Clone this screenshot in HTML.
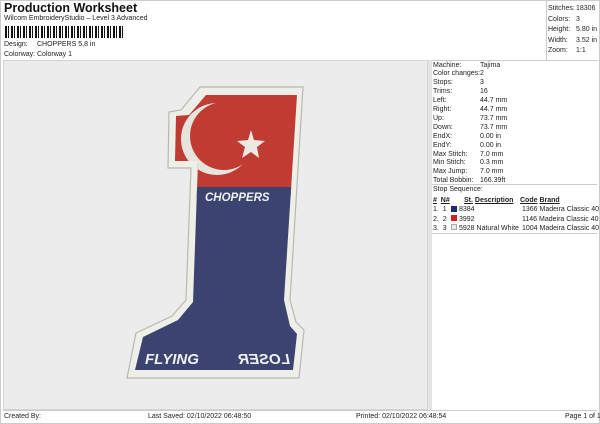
<!DOCTYPE html>
<html><head><style>
body{margin:0;width:600px;height:424px;background:#fff;font-family:"Liberation Sans",sans-serif;position:relative;overflow:hidden;color:#222}
.a{position:absolute;font-size:7px;white-space:nowrap}
.t{position:absolute;left:4px;top:1px;font-size:12.5px;font-weight:bold;color:#111}
</style></head><body>
<div style="position:absolute;left:0;top:0;width:600px;height:424px;border:1px solid #ccc;box-sizing:border-box"></div>
<div class="t">Production Worksheet</div>
<div class="a" style="left:4px;top:15px">Wilcom EmbroideryStudio – Level 3 Advanced</div>
<div style="position:absolute;left:5px;top:26px;width:118px;height:12px;background:repeating-linear-gradient(90deg,#111 0 2px,#fff 2px 3px,#111 3px 4px,#fff 4px 6px)"></div>
<div class="a" style="left:4px;top:41px">Design:</div><div class="a" style="left:37px;top:41px">CHOPPERS 5,8 in</div>
<div class="a" style="left:4px;top:51px">Colorway:</div><div class="a" style="left:37px;top:51px">Colorway 1</div>
<div style="position:absolute;left:3px;top:60px;width:425px;height:350px;background:#ececec;border:1px solid #d4d4d4;box-sizing:border-box"></div>
<div style="position:absolute;left:428px;top:60px;width:169px;height:350px;border-top:1px solid #ccc;border-left:1px solid #ccc"></div>
<div style="position:absolute;left:546px;top:0;width:51px;height:60px;border-left:1px solid #ccc"></div>
<div class="a" style="left:548px;top:4px;line-height:10.5px">Stitches:<br>Colors:<br>Height:<br>Width:<br>Zoom:</div>
<div class="a" style="left:576px;top:4px;line-height:10.5px">18306<br>3<br>5.80 in<br>3.52 in<br>1:1</div>
<div style="position:absolute;left:428px;top:60px;width:4px;height:350px;background:#e4e4e4"></div>
<div class="a" style="left:433px;top:61.5px;line-height:8.9px">Machine:<br>Color changes:<br>Stops:<br>Trims:<br>Left:<br>Right:<br>Up:<br>Down:<br>EndX:<br>EndY:<br>Max Stitch:<br>Min Stitch:<br>Max Jump:<br>Total Bobbin:<br>Stop Sequence:</div>
<div class="a" style="left:480px;top:61.5px;line-height:8.9px">Tajima<br>2<br>3<br>16<br>44.7 mm<br>44.7 mm<br>73.7 mm<br>73.7 mm<br>0.00 in<br>0.00 in<br>7.0 mm<br>0.3 mm<br>7.0 mm<br>166.39ft</div>
<div style="position:absolute;left:432px;top:184px;width:165px;border-top:1px solid #ccc"></div>
<div class="a" style="left:433px;top:197px;font-weight:bold"><u>#</u>&nbsp;&nbsp;<u>N#</u></div>
<div class="a" style="left:464px;top:197px;font-weight:bold"><u>St.</u> <u>Description</u></div>
<div class="a" style="left:520px;top:197px;font-weight:bold"><u>Code</u> <u>Brand</u></div>
<div class="a" style="left:433px;top:205px;line-height:9.5px">1.&nbsp; 1<br>2.&nbsp; 2<br>3.&nbsp; 3</div>
<div style="position:absolute;left:451px;top:206px;width:6px;height:6px;background:#1f2b6e"></div>
<div style="position:absolute;left:451px;top:215px;width:6px;height:6px;background:#d42020"></div>
<div style="position:absolute;left:451px;top:224px;width:6px;height:6px;background:#e8e8e8;border:1px solid #aaa;box-sizing:border-box"></div>
<div class="a" style="left:459px;top:205px;line-height:9.5px">8384<br>3992<br>5928 Natural White</div>
<div class="a" style="left:522px;top:205px;line-height:9.5px">1366 Madeira Classic 40<br>1146 Madeira Classic 40<br>1004 Madeira Classic 40</div>
<div style="position:absolute;left:432px;top:233px;width:165px;border-top:1px solid #ccc"></div>
<div style="position:absolute;left:3px;top:410px;width:594px;border-top:1px solid #ccc"></div>
<div class="a" style="left:4px;top:413px">Created By:</div>
<div class="a" style="left:148px;top:413px">Last Saved: 02/10/2022 06:48:50</div>
<div class="a" style="left:356px;top:413px">Printed: 02/10/2022 06:48:54</div>
<div class="a" style="left:565px;top:413px">Page 1 of 1</div>
<svg style="position:absolute;left:0;top:0" width="600" height="424">
<defs><clipPath id="c"><polygon points="206,95 297,95 284,300 290,326 297,334 293,370 135,370 143,337 178,320 193,302 198,161 175,161 176,116 189,115"/></clipPath></defs>
<polygon points="200,87 303,87 290,300 296,322 304,330 299,378 127,378 136,333 172,316 186,300 191,168 168,168 169,112 181,110" fill="#eeefe8" stroke="#b8b8b0" stroke-width="1.2"/>
<g clip-path="url(#c)">
<rect x="120" y="90" width="190" height="97" fill="#c03b32"/>
<rect x="120" y="187" width="190" height="190" fill="#3b4470"/>
<circle cx="217" cy="139" r="36" fill="#e6e4dc"/>
<circle cx="224" cy="136" r="34" fill="#c03b32"/>
<rect x="120" y="187" width="190" height="10" fill="#3b4470"/>
</g>
<polygon points="251,130 254,140 265,141 257,147 259,158 251,152 242,158 245,147 237,141 248,140" fill="#ebe9e2"/>
<text x="205" y="201" font-family="Liberation Sans" font-weight="bold" font-style="italic" font-size="11.5" fill="#f0f0f0">CHOPPERS</text>
<text x="145" y="364" font-family="Liberation Sans" font-weight="bold" font-style="italic" font-size="15" fill="#f0f0f0">FLYING</text>
<text transform="translate(290,364) scale(-1,1)" font-family="Liberation Sans" font-weight="bold" font-style="italic" font-size="15" fill="#f0f0f0">LOSER</text>
</svg>
</body></html>
